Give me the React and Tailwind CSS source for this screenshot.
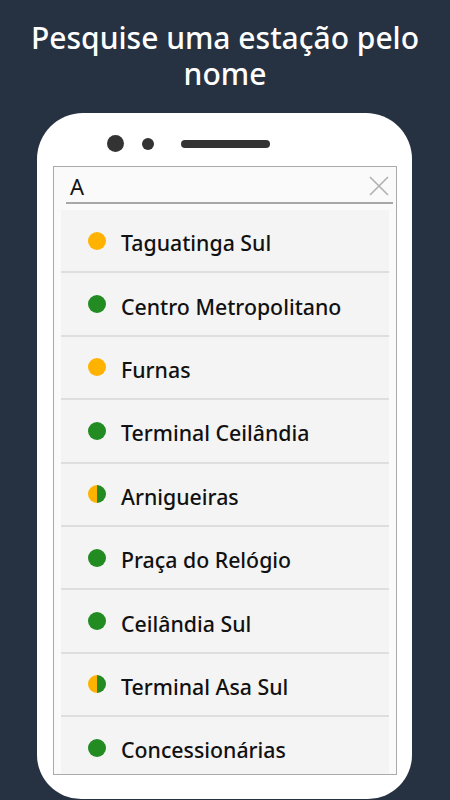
import React from "react";

const stations = [
  { name: "Taguatinga Sul", c: "o" },
  { name: "Centro Metropolitano", c: "g" },
  { name: "Furnas", c: "o" },
  { name: "Terminal Ceilândia", c: "g" },
  { name: "Arnigueiras", c: "h" },
  { name: "Praça do Relógio", c: "g" },
  { name: "Ceilândia Sul", c: "g" },
  { name: "Terminal Asa Sul", c: "h" },
  { name: "Concessionárias", c: "g" },
];

function Dot({ c }) {
  if (c === "o") return <div className="w-[18px] h-[18px] rounded-full bg-[#ffb300] shrink-0" />;
  if (c === "g") return <div className="w-[18px] h-[18px] rounded-full bg-[#228b22] shrink-0" />;
  return (
    <div className="w-[18px] h-[18px] rounded-full overflow-hidden flex shrink-0">
      <div className="w-1/2 h-full bg-[#ffb300]" />
      <div className="w-1/2 h-full bg-[#228b22]" />
    </div>
  );
}

export default function App() {
  return (
    <div className="w-[450px] h-[800px] bg-[#263241] overflow-hidden flex flex-col items-center" style={{ fontFamily: '"Noto Sans", "Open Sans", sans-serif' }}>
      <h1 className="mt-[20px] text-white text-[30px] leading-[36px] font-medium text-center px-6">
        Pesquise uma estação pelo nome
      </h1>
      <div className="mt-[21px] ml-[-1px] w-[375px] flex-1 bg-white rounded-t-[46px] rounded-b-[44px] mb-[1px] flex flex-col px-[16px]">
        <div className="h-[53px] flex items-center pl-[54px] pt-[8px] gap-[18px]">
          <div className="w-[17px] h-[17px] rounded-full bg-[#333333]" />
          <div className="w-[12px] h-[12px] rounded-full bg-[#333333]" />
          <div className="ml-[9px] w-[89px] h-[8px] rounded-full bg-[#333333]" />
        </div>
        <div className="w-[344px] h-[609px] border border-[#aaaaaa] bg-[#fafafa] flex flex-col overflow-hidden">
          <div className="h-[37px] mx-[12px] mr-[3px] border-b-2 border-[#a8a8a8] flex items-center justify-between">
            <span className="text-[22px] text-[#111111] pl-[4px] pt-[4px]">A</span>
            <svg width="20" height="20" viewBox="0 0 20 20" className="mr-[4px] mt-[2px]">
              <path d="M1 1 L19 19 M19 1 L1 19" stroke="#b0b0b0" strokeWidth="1.6" />
            </svg>
          </div>
          <div className="mx-[7px] mt-[6px] bg-[#f4f4f4] flex-1">
            {stations.map((s) => (
              <div key={s.name} className="h-[63.4px] border-b-2 border-[#dedede] flex items-center pl-[27px] gap-[15px]">
                <Dot c={s.c} />
                <span className="text-[21.3px] font-medium text-[#111111] pt-[5px]">{s.name}</span>
              </div>
            ))}
          </div>
        </div>
      </div>
    </div>
  );
}
